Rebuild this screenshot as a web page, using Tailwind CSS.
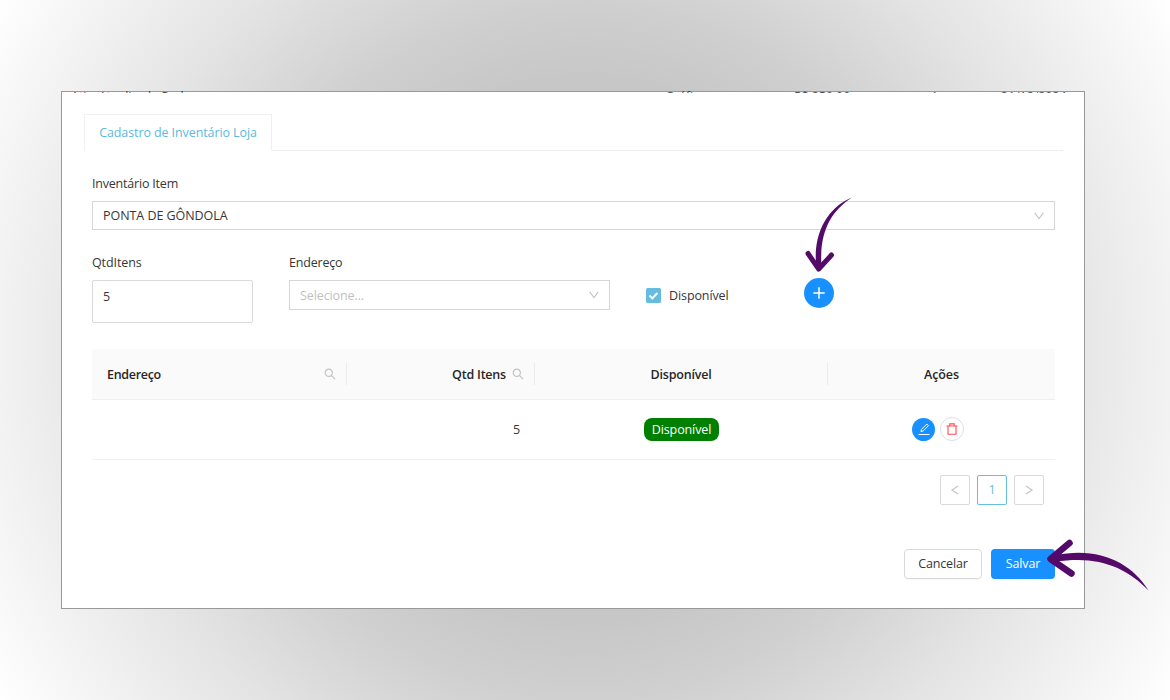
<!DOCTYPE html>
<html lang="pt-BR">
<head>
<meta charset="utf-8">
<title>Cadastro de Inventário Loja</title>
<script src="https://cdn.jsdelivr.net/npm/@tailwindcss/browser@4"></script>
</head>
<body class="relative h-[700px] w-[1170px] overflow-hidden bg-[radial-gradient(circle_at_585px_350px,#bcbcbc_0px,#c7c7c7_270px,#d0d0d0_350px,#e4e4e4_480px,#f2f2f2_585px,#ffffff_683px)] font-['Open_Sans',sans-serif] text-[12.5px] leading-5 tracking-[-0.1px] text-[#363636]">
<main class="ml-[61px] pt-[91px]">
<section class="relative flex h-[518px] w-[1024px] flex-col border border-[#999] bg-white pt-[22px] pr-[21px] pl-[22px]">
  <!-- Top edge of the list behind the dialog -->
  <div class="absolute -top-px left-0 h-[2px] w-[1022px] overflow-hidden text-black/70" aria-hidden="true">
    <div class="flex -translate-y-[4px] whitespace-nowrap leading-5">
      <span class="ml-[9px] w-[594px]">Ativ. Atualiz. do Ped</span><span class="w-[129px]">Gráfico</span><span class="w-[137px]">R$ 250,00</span><span class="w-[70px]">1</span><span>31/12/2024</span>
    </div>
  </div>
  <!-- Tabs -->
  <nav class="flex h-[37px]">
    <div class="w-[188px] border border-b-0 border-[#f0f0f0] pt-[8px] text-center text-[#5cb9df]"><span>Cadastro de Inventário Loja</span></div>
    <div class="flex-1 border-b border-[#ededed]"></div>
  </nav>
  <form class="flex flex-col pr-[8px] pl-[8px]">
    <label class="mt-[23px] h-5 tracking-[-0.2px]">Inventário Item</label>
    <div class="mt-[7px] flex h-[29px] items-center justify-between border border-[#d6d6d6] pr-[9px] pl-[10px]">
      <span class="tracking-[-0.05px]">PONTA DE GÔNDOLA</span>
      <svg class="h-3 w-3" viewBox="0 0 12 12" fill="none" stroke="#c4c4c4" stroke-width="1.1"><path d="M1.7 2.8 6 8.6 10.3 2.8"/></svg>
    </div>
    <div class="mt-[23px] flex h-[70px] items-start">
      <div class="w-[161px]">
        <label class="block">QtdItens</label>
        <div class="mt-[7px] h-[43px] rounded-[2px] border border-[#d9d9d9] pt-[6px] pl-[10px]">5</div>
      </div>
      <div class="ml-[36px] w-[321px]">
        <label class="block tracking-[-0.2px]">Endereço</label>
        <div class="mt-[7px] flex h-[30px] items-center justify-between border border-[#d6d6d6] pr-[9px] pl-[10px] text-[#bfbfbf]">
          <span class="pt-px">Selecione...</span>
          <svg class="h-3 w-3" viewBox="0 0 12 12" fill="none" stroke="#c4c4c4" stroke-width="1.1"><path d="M1.7 2.8 6 8.6 10.3 2.8"/></svg>
        </div>
      </div>
      <div class="mt-[32px] ml-[36px] flex w-[158px] items-center">
        <svg class="h-[15px] w-[15px]" viewBox="0 0 15 15"><rect width="15" height="15" rx="1.5" fill="#64bde0"/><path d="m3.5 7.5 2.8 2.9 5.1-5.4" fill="none" stroke="#fff" stroke-width="2"/></svg>
        <span class="ml-[8px] pt-px">Disponível</span>
      </div>
      <button type="button" class="mt-[25px] flex h-[30px] w-[30px] items-center justify-center rounded-full bg-[#1890ff]" aria-label="Adicionar">
        <svg class="h-3 w-3" viewBox="0 0 12 12" stroke="#fff" stroke-width="1.5"><path d="M6 .3v11.4M.3 6h11.4"/></svg>
      </button>
    </div>
    <!-- Table -->
    <div class="mt-[26px]">
      <div class="flex h-[51px] items-center border-b border-[#eeeeee] bg-[#fafafa] font-semibold text-[#262626]">
        <div class="flex h-[22px] w-[255px] items-center justify-between border-r border-[#ebebeb] pr-[10px] pl-[15px]"><span class="pt-[2px] tracking-[-0.3px]">Endereço</span>
          <svg class="h-3 w-3" viewBox="0 0 12 12" fill="none" stroke="#c3c3c3" stroke-width="1.2"><circle cx="4.8" cy="4.8" r="3.6"/><path d="m7.5 7.5 3.6 3.6"/></svg></div>
        <div class="flex h-[22px] w-[188px] items-center justify-end border-r border-[#ebebeb] pr-[10px]"><span class="mr-[6px] pt-[2px] tracking-[-0.2px]">Qtd Itens</span>
          <svg class="h-3 w-3" viewBox="0 0 12 12" fill="none" stroke="#c3c3c3" stroke-width="1.2"><circle cx="4.8" cy="4.8" r="3.6"/><path d="m7.5 7.5 3.6 3.6"/></svg></div>
        <div class="h-[22px] w-[293px] border-r border-[#ebebeb] text-center leading-[24px] tracking-[-0.2px]">Disponível</div>
        <div class="flex-1 pt-[2px] text-center">Ações</div>
      </div>
      <div class="flex h-[60px] items-center border-b border-[#f0f0f0]">
        <div class="w-[443px] pr-[15px] text-right">5</div>
        <div class="flex w-[293px] justify-center"><span class="flex h-[23px] w-[75px] items-center justify-center rounded-[8px] bg-[#008000] text-white">Disponível</span></div>
        <div class="flex flex-1 items-center justify-center gap-[5px] pr-[7px] pb-px">
          <span class="flex h-[23px] w-[23px] items-center justify-center rounded-full bg-[#1890ff]"><svg class="h-3 w-3" viewBox="0 0 12 12" fill="none" stroke="#fff" stroke-width="1"><path d="M.5 11.500h11M3 8.600l.4-2.100L8.800 1.100l1.600 1.600L5 8.100Z"/></svg></span>
          <span class="flex h-[24px] w-[24px] items-center justify-center rounded-full border border-[#dedede]"><svg class="h-3 w-3" viewBox="0 0 12 12" fill="none" stroke="#ff4d4f" stroke-width="1.1"><path d="M.5 3h11M2 3v8.2h8V3M3.800 3V.9h4.400V3"/></svg></span>
        </div>
      </div>
    </div>
    <!-- Pagination -->
    <div class="mt-[15px] mr-[11px] flex justify-end gap-[7px]">
      <span class="flex h-[30px] w-[30px] items-center justify-center rounded-[2px] border border-[#d9d9d9]"><svg class="h-3 w-3" viewBox="0 0 12 12" fill="none" stroke="#c4c4c4" stroke-width="1.1"><path d="M9 2 3 6l6 4"/></svg></span>
      <span class="flex h-[30px] w-[30px] items-center justify-center rounded-[2px] border border-[#64bfe3] font-medium text-[#64bfe3]">1</span>
      <span class="flex h-[30px] w-[30px] items-center justify-center rounded-[2px] border border-[#d9d9d9]"><svg class="h-3 w-3" viewBox="0 0 12 12" fill="none" stroke="#c4c4c4" stroke-width="1.1"><path d="m3 2 6 4-6 4"/></svg></span>
    </div>
    <div class="mt-[44px] flex justify-end gap-[9px]">
      <button type="button" class="h-[30px] w-[78px] rounded-[4px] border border-[#d9d9d9] tracking-[-0.15px] shadow-[0_1px_1px_rgba(0,0,0,0.03)]">Cancelar</button>
      <button type="button" class="h-[30px] w-[64px] rounded-[4px] bg-[#1890ff] text-white">Salvar</button>
    </div>
  </form>
</section>
</main>
<!-- Annotation arrows -->
<svg class="pointer-events-none absolute inset-0" width="1170" height="700" viewBox="0 0 1170 700" fill="#540a68">
  <path d="M852 197.500C832 205 812 229 816.300 267L821.500 267C819 232 831 211 852 197.500Z"/>
  <path d="M808 253.500 818.700 269 831.500 255" fill="none" stroke="#540a68" stroke-width="5" stroke-linecap="round" stroke-linejoin="round"/>
  <path d="M1148.500 590.500C1131 562 1098 546 1054 555.500L1055 562C1097 555 1126 567 1148.500 590.500Z"/>
  <path d="M1069.500 543 1050.500 559 1071.500 573.500" fill="none" stroke="#540a68" stroke-width="6.500" stroke-linecap="round" stroke-linejoin="round"/>
</svg>
</body>
</html>
